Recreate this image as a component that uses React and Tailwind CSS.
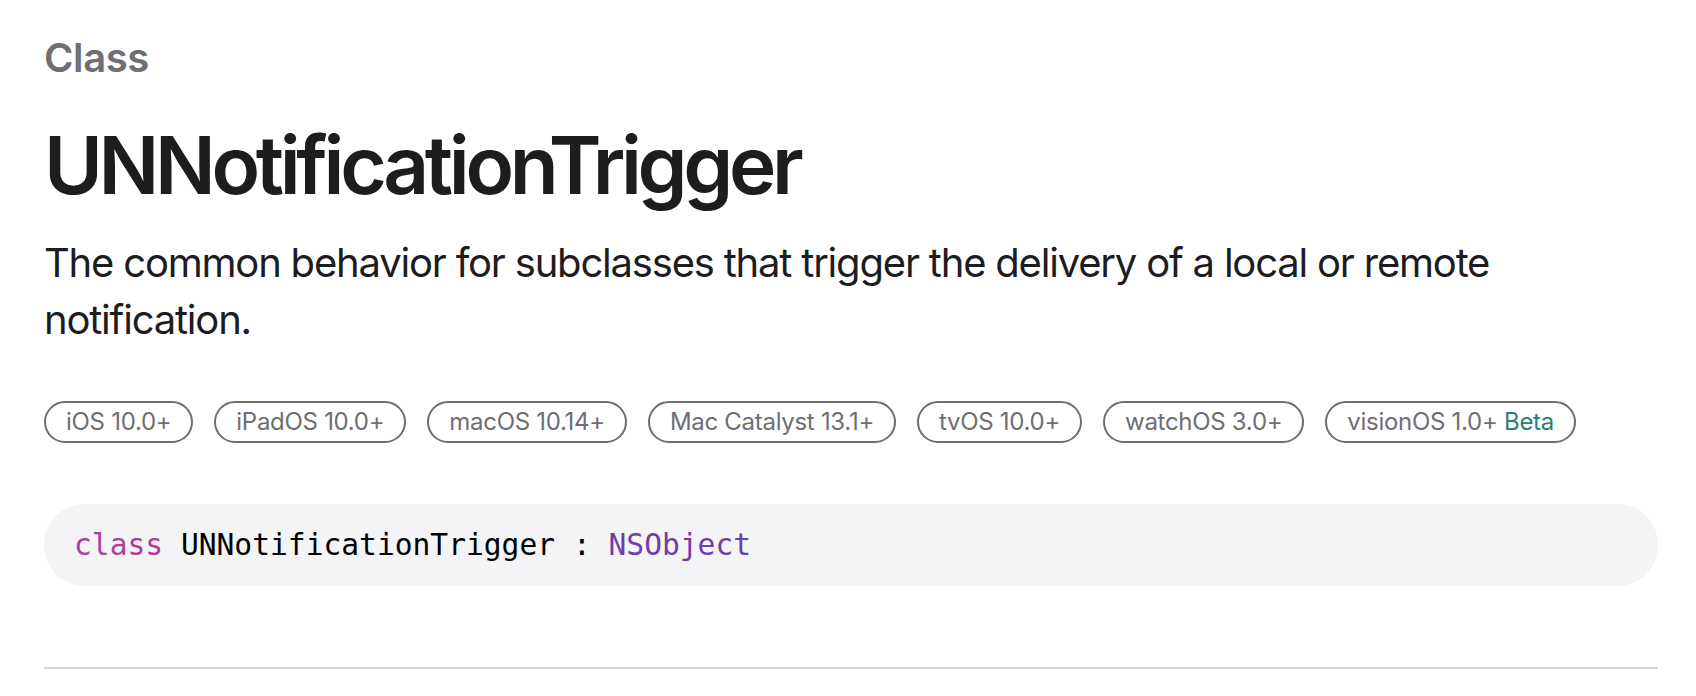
export default function App() {
  const platforms = [
    "iOS 10.0+",
    "iPadOS 10.0+",
    "macOS 10.14+",
    "Mac Catalyst 13.1+",
    "tvOS 10.0+",
    "watchOS 3.0+",
  ];

  return (
    <div className="min-h-screen bg-white pl-[44px] pr-[38px] pt-[34px] font-['Inter','Noto_Sans',sans-serif] text-[#1d1d1f]">
      <div className="text-[40px] leading-[48px] font-semibold tracking-[-0.01em] text-[#6e6e73]">Class</div>

      <h1 className="mt-[39px] text-[80px] leading-[88px] font-semibold tracking-[-0.054em]">
        UNNotificationTrigger
      </h1>

      <p className="mt-[25px] text-[40px] leading-[57px] font-normal tracking-[-0.03em]">
        The common behavior for subclasses that trigger the delivery of a local or remote notification.
      </p>

      <div className="mt-[53px] flex flex-wrap gap-[21px]">
        {platforms.map((p) => (
          <span
            key={p}
            className="h-[42px] rounded-full border-2 border-[#6e6e73] px-5 text-[24px] leading-[38px] tracking-[-0.012em] text-[#6e6e73]"
          >
            {p}
          </span>
        ))}
        <span className="h-[42px] rounded-full border-2 border-[#6e6e73] px-5 text-[24px] leading-[38px] tracking-[-0.012em] text-[#6e6e73]">
          visionOS 1.0+ <span className="text-[#2a7f76]">Beta</span>
        </span>
      </div>

      <div className="mt-[61px] flex h-[82px] items-center rounded-[40px] bg-[#f4f4f6] px-[30px]">
        <code className="font-['DejaVu_Sans_Mono',monospace] text-[29.6px] text-black">
          <span className="text-[#ad3da4]">class</span> UNNotificationTrigger :{" "}
          <span className="text-[#703daa]">NSObject</span>
        </code>
      </div>

      <div className="mt-[81px] h-[2px] bg-[#d2d2d7]" />
    </div>
  );
}
